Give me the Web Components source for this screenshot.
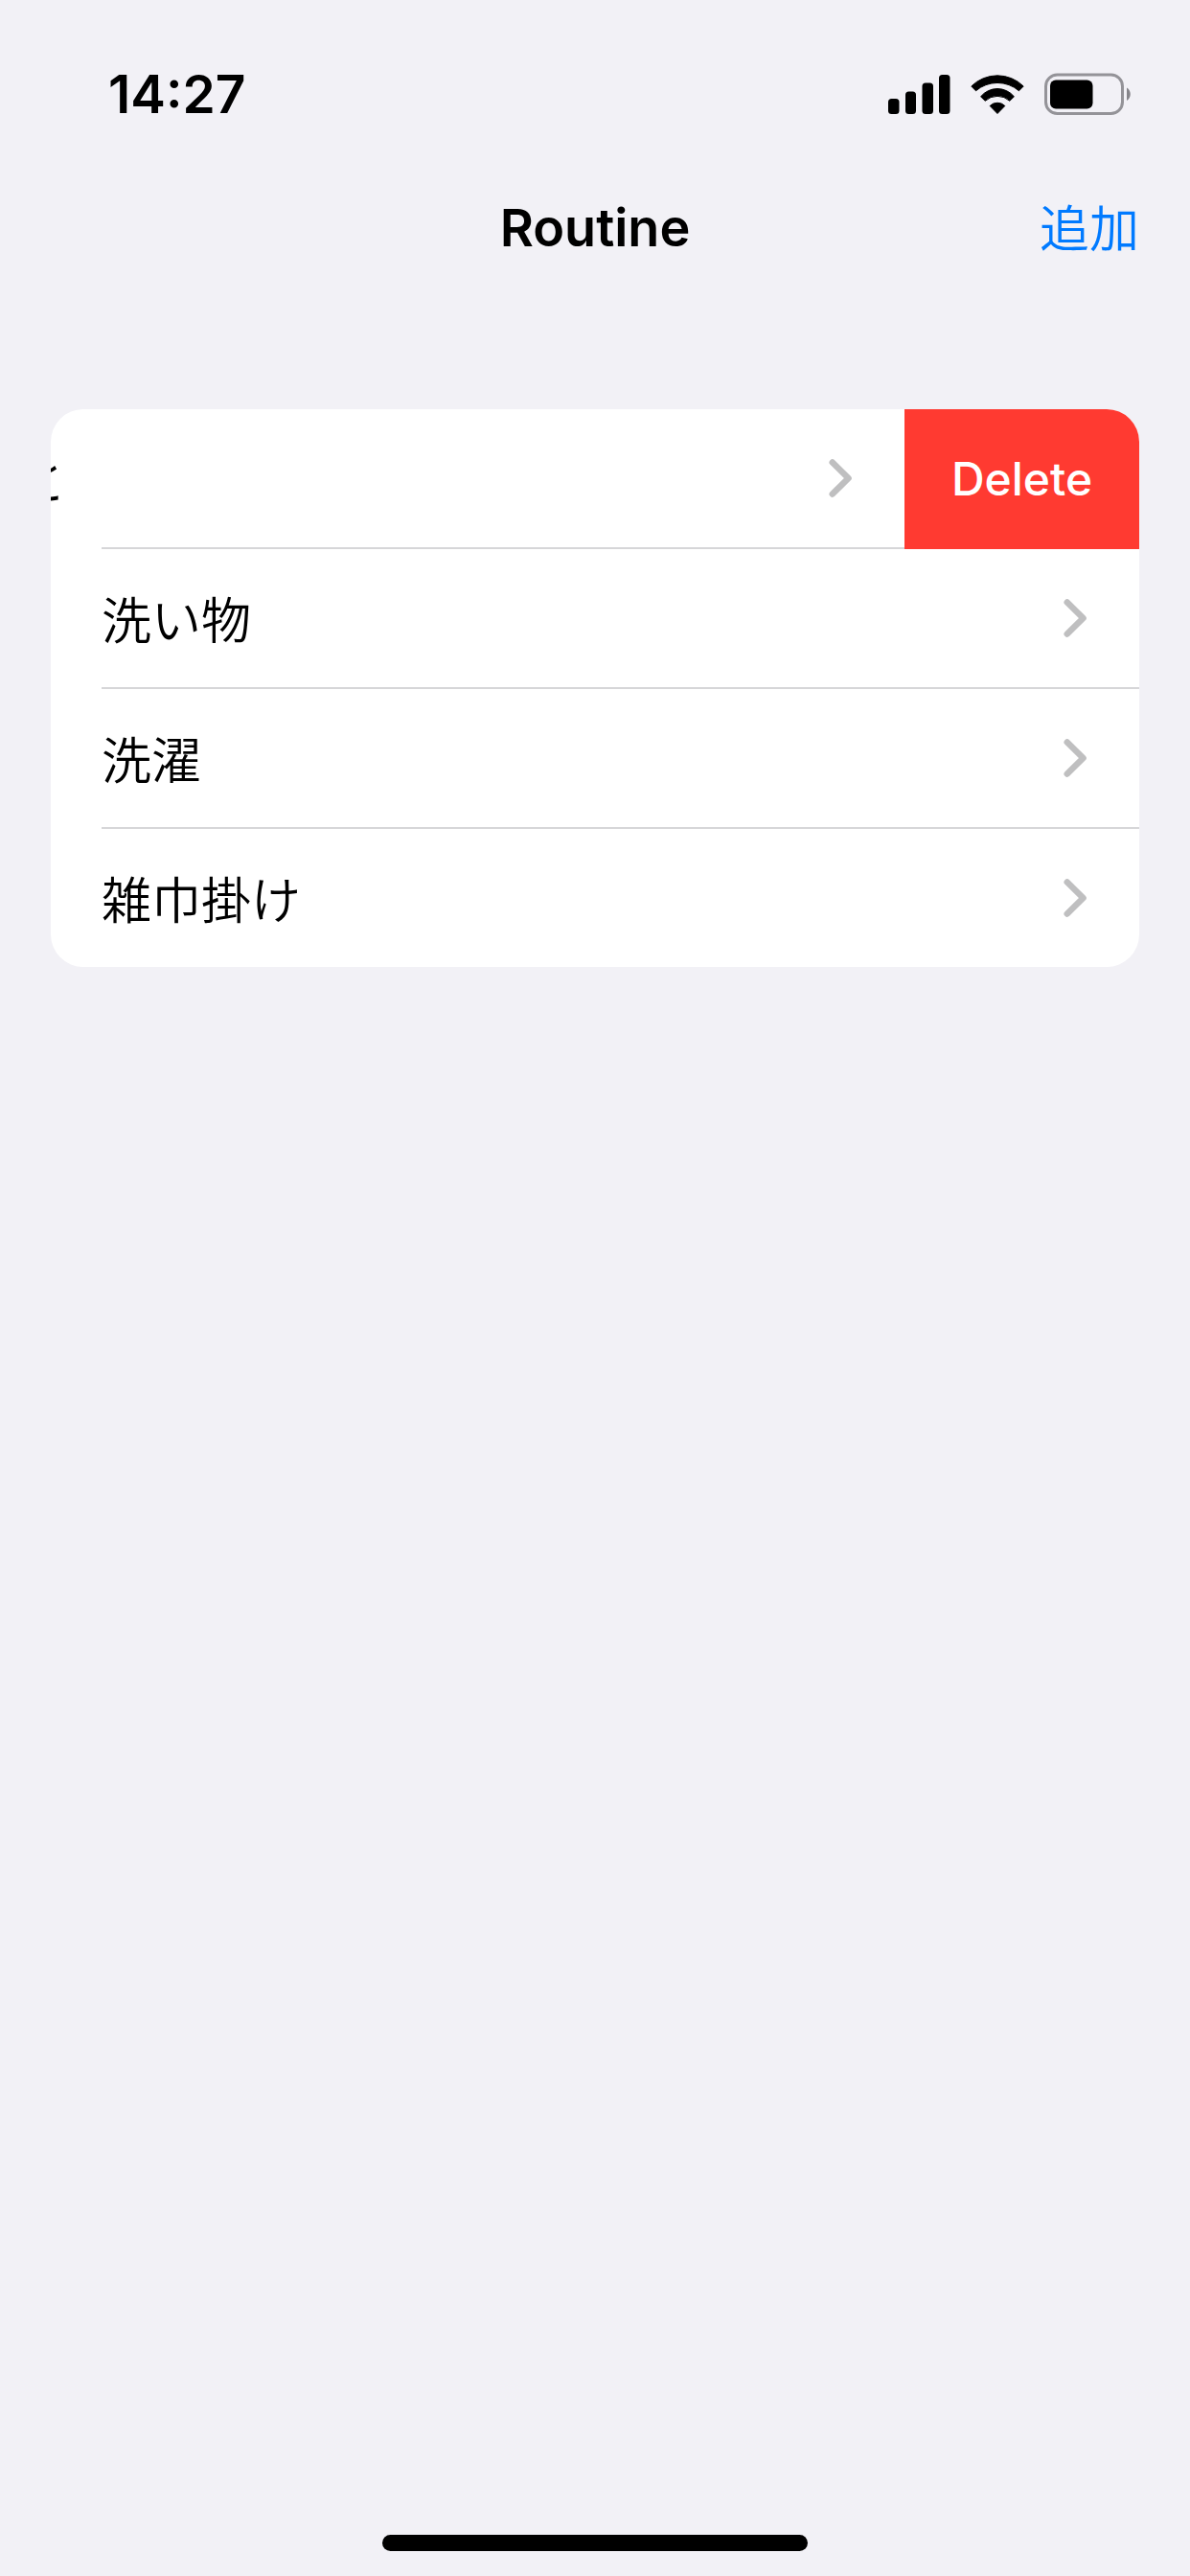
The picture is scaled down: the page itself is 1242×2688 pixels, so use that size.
<!DOCTYPE html>
<html lang="ja">
<head>
<meta charset="utf-8">
<meta name="viewport" content="width=device-width, initial-scale=1">
<title>Routine</title>
<style>
  body {
    margin: 0;
    background: #f2f1f6;
    color: #000;
    font-family: Inter, "Noto Sans CJK JP", sans-serif;
  }
</style>
</head>
<body>
<routine-app></routine-app>

<script>
const attach = (el, html) => {
  el.attachShadow({ mode: "open" }).innerHTML = html;
};

customElements.define("status-bar", class extends HTMLElement {
  constructor() {
    super();
    attach(this, `
      <style>
        :host { display: flex; align-items: center; justify-content: space-between; height: 196px; padding: 0 61px 0 113px; }
        time { font-size: 55px; font-weight: 600; line-height: 64px; }
        .icons { display: flex; align-items: center; gap: 21px; }
        svg { display: block; }
      </style>
      <time><slot></slot></time>
      <div class="icons">
        <svg width="65" height="44" viewBox="0 0 65 44" aria-hidden="true">
          <rect x="0" y="27" width="11.5" height="16" rx="3.5"/>
          <rect x="18" y="19.5" width="11" height="23.5" rx="3.5"/>
          <rect x="35.5" y="10.5" width="11.5" height="32.5" rx="3.5"/>
          <rect x="53" y="2" width="11.5" height="41" rx="3.5"/>
        </svg>
        <svg width="56" height="44" viewBox="0 0 56 44" aria-hidden="true" stroke="#000" stroke-width="1" stroke-linejoin="round">
          <path d="M.8 14A38.7 38.7 0 0 1 55.2 14L50.5 18.8A34.5 34.5 0 0 0 5.5 18.8Z"/>
          <path d="M10.6 24.8A22.5 22.5 0 0 1 45.4 24.8L40.8 29.3A19 19 0 0 0 15.2 29.3Z"/>
          <path d="M20.2 34.5A11 11 0 0 1 35.8 34.5L28 42.5Z"/>
        </svg>
        <svg width="91" height="44" viewBox="0 0 91 44" aria-hidden="true">
          <rect x="1.5" y="2" width="80" height="40.5" rx="12" fill="none" stroke="#949398" stroke-width="3"/>
          <rect x="6" y="7.5" width="44.5" height="30" rx="6"/>
          <path d="M86 15.5C91 18.5 91 26 86 29Z" fill="#86858a"/>
        </svg>
      </div>`);
  }
});

customElements.define("nav-bar", class extends HTMLElement {
  constructor() {
    super();
    attach(this, `
      <style>
        :host { display: grid; grid-template-columns: 1fr auto 1fr; align-items: center; height: 84px; padding: 0 53px; }
        h1 { grid-column: 2; margin: 0; font-size: 54px; font-weight: 600; line-height: 64px; }
        button { justify-self: end; margin: 0; padding: 0 0 4px; border: 0; background: none; color: #007aff;
          font: 350 52px/64px "Noto Sans CJK JP", sans-serif; cursor: pointer; }
      </style>
      <h1><slot></slot></h1>
      <button type="button"><slot name="action"></slot></button>`);
  }
});

customElements.define("routine-row", class extends HTMLElement {
  constructor() {
    super();
    attach(this, `
      <style>
        :host { --action: 245px; display: grid; grid-template-columns: minmax(0, 1fr) auto; background: #fff; }
        .front { grid-column: 1; display: flex; justify-content: flex-end; overflow: hidden; }
        a { box-sizing: border-box; flex: none; width: 100%; height: 144px; padding: 0 53px;
          display: flex; align-items: center; justify-content: space-between;
          color: #000; text-decoration: none; font: 350 52px/64px "Noto Sans CJK JP", sans-serif; }
        .line { grid-column: 1; height: 2px; margin-left: 53px; background: #d6d6d8; }
        button { display: none; }
        svg { display: block; flex: none; }
        :host([swiped]) a { width: calc(100% + var(--action)); }
        :host([swiped]) button { display: block; grid-area: 1 / 2 / 3 / 3; width: var(--action);
          margin: 0; padding: 0; border: 0; background: #ff3a31; color: #fff;
          font: 500 48px/64px Inter, sans-serif; cursor: pointer; }
        :host([last]) .line { display: none; }
      </style>
      <div class="front">
        <a href="#"><span><slot></slot></span>
          <svg width="28" height="44" viewBox="0 0 28 44" aria-hidden="true">
            <path d="M5.8 5.5L22.5 22L5.8 38.5" fill="none" stroke="#bfbfc0" stroke-width="6.6" stroke-linecap="round" stroke-linejoin="round"/>
          </svg>
        </a>
      </div>
      <div class="line"></div>
      <button type="button">Delete</button>`);
  }
});

customElements.define("routine-list", class extends HTMLElement {
  constructor() {
    super();
    attach(this, `
      <style>
        :host { display: block; margin: 147px 53px 0; border-radius: 34px; overflow: hidden; }
      </style>
      <slot></slot>`);
  }
});

customElements.define("home-indicator", class extends HTMLElement {
  constructor() {
    super();
    attach(this, `
      <style>
        :host { display: flex; justify-content: center; margin-top: auto; padding-bottom: 26px; }
        div { width: 444px; height: 17px; border-radius: 9px; background: #000; }
      </style>
      <div></div>`);
  }
});

customElements.define("routine-app", class extends HTMLElement {
  constructor() {
    super();
    attach(this, `
      <style>
        :host { display: flex; flex-direction: column; min-height: 100vh; }
      </style>
      <status-bar>14:27</status-bar>
      <nav-bar>Routine<span slot="action">追加</span></nav-bar>
      <routine-list>
        <routine-row swiped>おしごと</routine-row>
        <routine-row>洗い物</routine-row>
        <routine-row>洗濯</routine-row>
        <routine-row last>雑巾掛け</routine-row>
      </routine-list>
      <home-indicator></home-indicator>`);
  }
});
</script>
</body>
</html>
